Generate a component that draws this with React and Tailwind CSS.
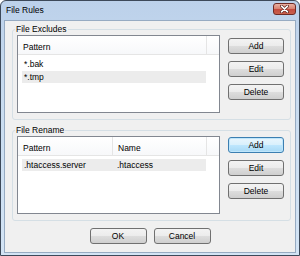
import React from "react";

const btnBase =
  "h-[16px] rounded-[3px] border text-[8.5px] leading-none text-black flex items-center justify-center";
const btnNormal =
  "border-[#707070] bg-[linear-gradient(to_bottom,#f3f3f3_0%,#ececec_48%,#dddddd_52%,#cfcfcf_100%)]";
const btnDefault =
  "border-[#3c7fb1] bg-[linear-gradient(to_bottom,#eaf6fd_0%,#d9f0fc_48%,#bee6fd_52%,#a7d9f5_100%)] shadow-[inset_0_0_0_1px_#bfe6fb]";

const Btn = ({ children, primary, w = "w-[56px]" }) => (
  <button className={`${btnBase} ${w} ${primary ? btnDefault : btnNormal}`}>
    {children}
  </button>
);

// listview with header + rows
const ListView = ({ columns, rows }) => (
  <div className="w-[203px] h-[78px] border border-[#828790] bg-white flex flex-col">
    <div className="flex h-[19px] border-b border-[#e5e5e5] bg-[linear-gradient(to_bottom,#ffffff,#f7f8fa)]">
      {columns.map((c) => (
        <div
          key={c.label}
          className={`${c.w} border-r border-[#e5e5e5] pl-[5px] pt-[6px] leading-[10px]`}
        >
          {c.label}
        </div>
      ))}
      <div className="flex-1" />
    </div>
    <div className="flex flex-col gap-[1px] pt-[3px]">
      {rows.map((r, i) => (
        <div
          key={i}
          className={`ml-[4px] w-[184px] h-[12px] leading-[12px] flex ${r.selected ? "bg-[#ececec]" : ""}`}
        >
          {r.cells.map((cell, j) => (
            <div key={j} className={j === 0 ? `${r.firstW || ""} pl-[2px]` : "pl-[4px]"}>
              {cell}
            </div>
          ))}
        </div>
      ))}
    </div>
  </div>
);

const Group = ({ title, children }) => (
  <fieldset className="ml-[7px] w-[279px] rounded-[3px] border border-[#d5dfe5] p-0">
    <legend className="ml-[2px] px-[1px] leading-[11px] text-[8.5px]">{title}</legend>
    <div className="flex pl-[4px] pb-[6px]">
      {children}
    </div>
  </fieldset>
);

const App = () => {
  return (
    <div className="w-[300px] h-[256px] bg-white font-['Liberation_Sans',Arial,sans-serif] text-[8.5px] text-black">
      <div className="w-full h-full flex flex-col border border-[#3d4959] rounded-t-[6px] bg-[linear-gradient(to_bottom,#bcd1ea,#c9dcf0_40%,#d3e4f5)]">
        {/* title bar */}
        <div className="h-[19px] flex items-center justify-between pl-[5px] pr-[3px]">
          <span className="text-[8.5px] leading-none">File Rules</span>
          <div className="w-[23px] h-[12px] mt-[-3px] rounded-[3px] border border-[#6f2b25] bg-[linear-gradient(to_bottom,#eab1a3_0%,#d98574_45%,#c54c3f_55%,#c8604c_100%)] flex items-center justify-center">
            <svg width="9" height="8" viewBox="0 0 9 8">
              <path d="M1.5 1.2 L7.5 6.8 M7.5 1.2 L1.5 6.8" stroke="#5a2420" strokeWidth="3" strokeLinecap="round" />
              <path d="M1.5 1.2 L7.5 6.8 M7.5 1.2 L1.5 6.8" stroke="#ffffff" strokeWidth="1.6" strokeLinecap="round" />
            </svg>
          </div>
        </div>

        {/* client area */}
        <div className="mx-[3px] mb-[2px] flex-1 border border-[#97abc2] bg-[#f0f0f0] flex flex-col pt-[3px]">
          <Group title="File Excludes">
            <ListView
              columns={[{ label: "Pattern", w: "w-[189px]" }]}
              rows={[
                { cells: ["*.bak"] },
                { cells: ["*.tmp"], selected: true },
              ]}
            />
            <div className="ml-[8px] mt-[3px] flex flex-col gap-[7px]">
              <Btn>Add</Btn>
              <Btn>Edit</Btn>
              <Btn>Delete</Btn>
            </div>
          </Group>

          <div className="h-[5px]" />

          <Group title="File Rename">
            <ListView
              columns={[
                { label: "Pattern", w: "w-[95px]" },
                { label: "Name", w: "w-[94px]" },
              ]}
              rows={[
                { cells: [".htaccess.server", ".htaccess"], selected: true, firstW: "w-[91px]" },
              ]}
            />
            <div className="ml-[8px] mt-[1px] flex flex-col gap-[7px]">
              <Btn primary>Add</Btn>
              <Btn>Edit</Btn>
              <Btn>Delete</Btn>
            </div>
          </Group>

          <div className="mt-[7px] flex justify-center gap-[7px]">
            <Btn w="w-[57px]">OK</Btn>
            <Btn w="w-[57px]">Cancel</Btn>
          </div>
        </div>
      </div>
    </div>
  );
};

export default App;
